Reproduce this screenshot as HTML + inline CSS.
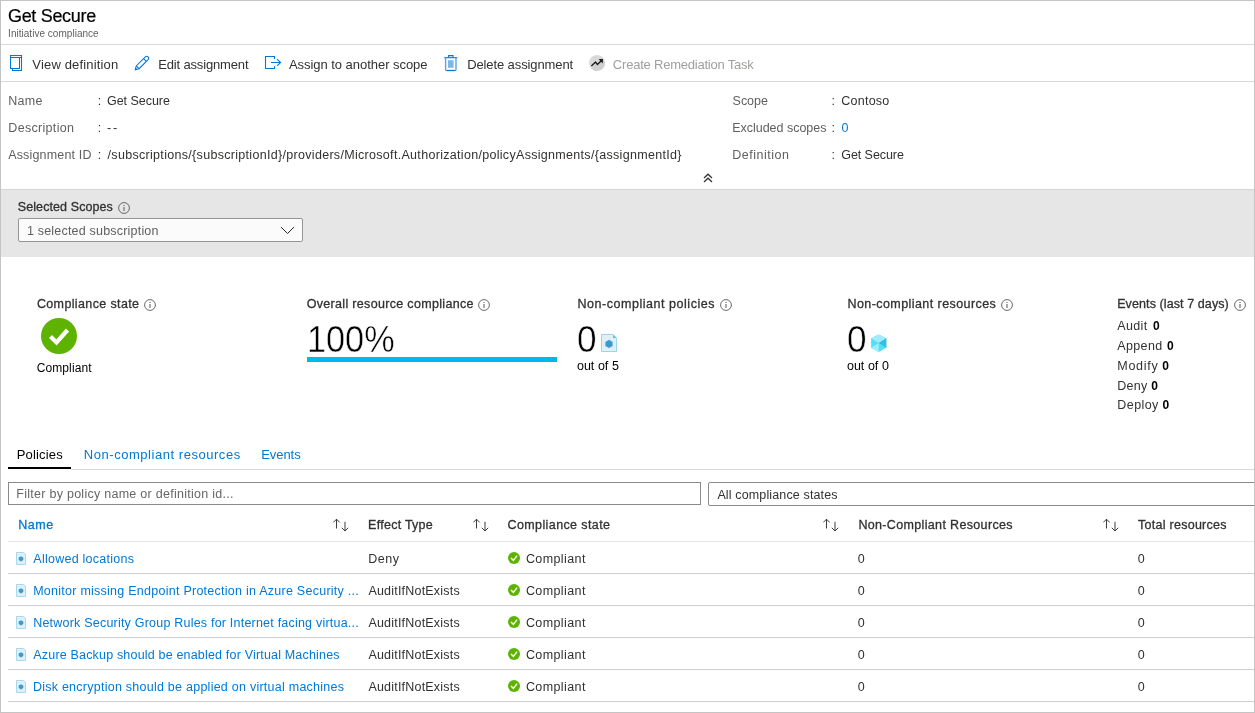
<!DOCTYPE html>
<html><head><meta charset="utf-8"><style>
html,body{margin:0;padding:0;background:#fff}
body{width:1255px;height:713px;position:relative;overflow:hidden;font-family:"Liberation Sans",sans-serif;-webkit-font-smoothing:antialiased}
.wrap{position:absolute;left:0;top:0;width:1255px;height:713px;will-change:transform}
.t{position:absolute;white-space:nowrap}
.frame{position:absolute;left:0;top:0;width:1255px;height:713px;box-sizing:border-box;border:1px solid #c4c4c4;pointer-events:none}
</style></head><body>
<div class="wrap">
<div class="t" style="left:8.00px;top:4.81px;font-size:18px;line-height:22px;color:#000;letter-spacing:-0.320px;-webkit-text-stroke:0.2px #000">Get Secure</div>
<div class="t" style="left:8.10px;top:27.91px;font-size:10px;line-height:12px;color:#5f5f5f;letter-spacing:0.025px;">Initiative compliance</div>
<div style="position:absolute;left:1px;top:44px;width:1253px;height:1px;background:#d9d9d9"></div>
<svg style="position:absolute;left:10px;top:54px" width="13" height="18" viewBox="0 0 13 18"><g fill="none" stroke="#0078d4" stroke-width="1.05"><rect x="0.5" y="1.5" width="11" height="2"/><path d="M0.5 3.5V14.5H9.5V3.5"/><path d="M2.5 14.5V16.5H11.5V3.5"/></g></svg>
<div class="t" style="left:32.37px;top:57.01px;font-size:13px;line-height:16px;color:#323130;letter-spacing:0.161px;">View definition</div>
<svg style="position:absolute;left:134px;top:55px" width="16" height="16" viewBox="0 0 16 16"><g fill="none" stroke="#0078d4" stroke-width="1.05"><path d="M1.2 14.8L2.26 10.92L11.32 1.86A2 2 0 0 1 14.14 4.68L5.08 13.74Z"/><path d="M9.55 3.63L12.37 6.45"/><path d="M2.26 10.92L5.08 13.74"/></g><path d="M0.9 15.1L1.6 12.5L3.5 14.4Z" fill="#0078d4"/></svg>
<div class="t" style="left:158.16px;top:57.01px;font-size:13px;line-height:16px;color:#323130;letter-spacing:-0.149px;">Edit assignment</div>
<svg style="position:absolute;left:264px;top:54px" width="20" height="17" viewBox="0 0 20 17"><g fill="none" stroke="#0078d4" stroke-width="1.05"><path d="M10.5 5V2.5H1.5V14.5H10.5V12.2"/><path d="M7 8.5H16.6"/><path d="M13.1 5.1L16.6 8.5L13.1 11.9"/></g></svg>
<div class="t" style="left:288.90px;top:57.01px;font-size:13px;line-height:16px;color:#323130;letter-spacing:-0.038px;">Assign to another scope</div>
<svg style="position:absolute;left:444px;top:54px" width="14" height="18" viewBox="0 0 14 18"><g fill="none" stroke="#0078d4" stroke-width="1.1"><path d="M4.6 3.3V1.6H9V3.3"/><path d="M0.3 3.7H13.3"/><path d="M1.6 3.7V15.6Q1.6 16.6 2.6 16.6H11Q12 16.6 12 15.6V3.7" stroke-width="1.4" stroke="#5aa6e3"/><path d="M2.6 16.4H11.2"/></g><rect x="4" y="6.2" width="5.6" height="7.6" fill="#7ab8ea"/></svg>
<div class="t" style="left:467.16px;top:57.01px;font-size:13px;line-height:16px;color:#323130;letter-spacing:-0.104px;">Delete assignment</div>
<svg style="position:absolute;left:589px;top:55px" width="16" height="16" viewBox="0 0 16 16"><circle cx="8" cy="8" r="8" fill="#d9d9d9"/><path d="M2.5 13.5L13.5 2.5L16 8 A8 8 0 0 1 2.5 13.5Z" fill="#cfcfcf"/><path d="M2.4 11L6.5 7L8.4 9.5L12.6 5.4" fill="none" stroke="#1b1b1b" stroke-width="1.4"/><path d="M9.6 4.1H13.9V8.4Z" fill="#1b1b1b"/></svg>
<div class="t" style="left:612.85px;top:57.01px;font-size:13px;line-height:16px;color:#a19f9d;letter-spacing:-0.217px;">Create Remediation Task</div>
<div style="position:absolute;left:1px;top:81px;width:1253px;height:1px;background:#d9d9d9"></div>
<div class="t" style="left:8.30px;top:93.01px;font-size:12.5px;line-height:16px;color:#5f5f5f;letter-spacing:0.283px;">Name</div>
<div class="t" style="left:97.67px;top:93.01px;font-size:12.5px;line-height:16px;color:#323130;">:</div>
<div class="t" style="left:106.97px;top:93.01px;font-size:12.5px;line-height:16px;color:#323130;letter-spacing:-0.033px;">Get Secure</div>
<div class="t" style="left:8.30px;top:120.01px;font-size:12.5px;line-height:16px;color:#5f5f5f;letter-spacing:0.315px;">Description</div>
<div class="t" style="left:97.67px;top:120.01px;font-size:12.5px;line-height:16px;color:#323130;">:</div>
<div class="t" style="left:107.10px;top:120.01px;font-size:12.5px;line-height:16px;color:#323130;letter-spacing:1.850px;">--</div>
<div class="t" style="left:8.20px;top:147.01px;font-size:12.5px;line-height:16px;color:#5f5f5f;letter-spacing:0.171px;">Assignment ID</div>
<div class="t" style="left:97.67px;top:147.01px;font-size:12.5px;line-height:16px;color:#323130;">:</div>
<div class="t" style="left:107.60px;top:147.01px;font-size:12.5px;line-height:16px;color:#323130;letter-spacing:0.307px;">/subscriptions/{subscriptionId}/providers/Microsoft.Authorization/policyAssignments/{assignmentId}</div>
<div class="t" style="left:732.58px;top:93.01px;font-size:12.5px;line-height:16px;color:#5f5f5f;letter-spacing:-0.037px;">Scope</div>
<div class="t" style="left:831.48px;top:93.01px;font-size:12.5px;line-height:16px;color:#323130;">:</div>
<div class="t" style="left:841.27px;top:93.01px;font-size:12.5px;line-height:16px;color:#323130;letter-spacing:0.250px;">Contoso</div>
<div class="t" style="left:732.20px;top:120.01px;font-size:12.5px;line-height:16px;color:#5f5f5f;letter-spacing:-0.014px;">Excluded scopes</div>
<div class="t" style="left:831.48px;top:120.01px;font-size:12.5px;line-height:16px;color:#323130;">:</div>
<div class="t" style="left:841.40px;top:120.01px;font-size:12.5px;line-height:16px;color:#0078d4;">0</div>
<div class="t" style="left:732.20px;top:147.01px;font-size:12.5px;line-height:16px;color:#5f5f5f;letter-spacing:0.528px;">Definition</div>
<div class="t" style="left:831.48px;top:147.01px;font-size:12.5px;line-height:16px;color:#323130;">:</div>
<div class="t" style="left:841.27px;top:147.01px;font-size:12.5px;line-height:16px;color:#323130;letter-spacing:-0.067px;">Get Secure</div>
<svg style="position:absolute;left:703px;top:173px" width="10" height="10" viewBox="0 0 10 10"><g fill="none" stroke="#323130" stroke-width="1.2"><path d="M1 5L5 1.2L9 5"/><path d="M1 9L5 5.2L9 9"/></g></svg>
<div style="position:absolute;left:1px;top:189px;width:1253px;height:68px;background:#e6e6e6;border-top:1px solid #d5d5d5;box-sizing:border-box"></div>
<div class="t" style="left:17.77px;top:199.01px;font-size:12.5px;line-height:16px;color:#323130;letter-spacing:0.091px;-webkit-text-stroke:0.3px #323130">Selected Scopes</div>
<svg style="position:absolute;left:118px;top:202px" width="12" height="12" viewBox="0 0 12 12"><circle cx="6" cy="6" r="5.4" fill="none" stroke="#595959" stroke-width="0.9"/><rect x="5.5" y="5" width="1" height="4" fill="#595959"/><rect x="5.5" y="3" width="1" height="1" fill="#595959"/></svg>
<div style="position:absolute;left:18px;top:218px;width:285px;height:24px;background:#fbfbfb;border:1px solid #959595;box-sizing:border-box;border-radius:2px"></div>
<div class="t" style="left:26.90px;top:222.71px;font-size:12.5px;line-height:16px;color:#5f5f5f;letter-spacing:0.201px;">1 selected subscription</div>
<svg style="position:absolute;left:280px;top:225px" width="15" height="10" viewBox="0 0 15 10"><path d="M1.1 2.2L7.5 8.5L13.9 2.2" fill="none" stroke="#252525" stroke-width="1"/></svg>
<div class="t" style="left:36.88px;top:295.71px;font-size:12.5px;line-height:16px;color:#323130;letter-spacing:0.375px;-webkit-text-stroke:0.3px #323130">Compliance state</div>
<svg style="position:absolute;left:144px;top:299.2px" width="12" height="12" viewBox="0 0 12 12"><circle cx="6" cy="6" r="5.4" fill="none" stroke="#595959" stroke-width="0.9"/><rect x="5.5" y="5" width="1" height="4" fill="#595959"/><rect x="5.5" y="3" width="1" height="1" fill="#595959"/></svg>
<svg style="position:absolute;left:41px;top:318px" width="36" height="36" viewBox="0 0 36 36"><circle cx="18" cy="18" r="18" fill="#5db300"/><path d="M9.5 18.5L15.5 24.5L26.5 12" fill="none" stroke="#fff" stroke-width="4.2"/></svg>
<div class="t" style="left:36.70px;top:360.51px;font-size:12px;line-height:15px;color:#000;letter-spacing:0.103px;">Compliant</div>
<div class="t" style="left:306.68px;top:296.01px;font-size:12.5px;line-height:16px;color:#323130;letter-spacing:0.325px;-webkit-text-stroke:0.3px #323130">Overall resource compliance</div>
<svg style="position:absolute;left:478px;top:299.2px" width="12" height="12" viewBox="0 0 12 12"><circle cx="6" cy="6" r="5.4" fill="none" stroke="#595959" stroke-width="0.9"/><rect x="5.5" y="5" width="1" height="4" fill="#595959"/><rect x="5.5" y="3" width="1" height="1" fill="#595959"/></svg>
<div class="t" style="left:307.26px;top:317.02px;font-size:37px;line-height:46px;color:#000;transform:scaleX(0.9260);transform-origin:0 0;-webkit-text-stroke:0.5px #fff">100%</div>
<div style="position:absolute;left:307px;top:357px;width:250px;height:5px;background:#00b7f0"></div>
<div class="t" style="left:577.50px;top:296.01px;font-size:12.5px;line-height:16px;color:#323130;letter-spacing:0.536px;-webkit-text-stroke:0.3px #323130">Non-compliant policies</div>
<svg style="position:absolute;left:720px;top:299.2px" width="12" height="12" viewBox="0 0 12 12"><circle cx="6" cy="6" r="5.4" fill="none" stroke="#595959" stroke-width="0.9"/><rect x="5.5" y="5" width="1" height="4" fill="#595959"/><rect x="5.5" y="3" width="1" height="1" fill="#595959"/></svg>
<div class="t" style="left:576.99px;top:317.02px;font-size:37px;line-height:46px;color:#000;transform:scaleX(0.9516);transform-origin:0 0;-webkit-text-stroke:0.5px #fff">0</div>
<svg style="position:absolute;left:601px;top:334px" width="16" height="18" viewBox="0 0 16 18"><path d="M0.5 0.5H12L15.5 4V17.5H0.5Z" fill="#dff0f8" stroke="#9dd3ec" stroke-width="1"/><path d="M12 0.5V4H15.5Z" fill="#6cbde4"/><path d="M8 5.8L11.6 7.9V11.9L8 14L4.4 11.9V7.9Z" fill="#3a9bd2"/></svg>
<div class="t" style="left:576.90px;top:357.71px;font-size:12.5px;line-height:16px;color:#000;letter-spacing:0.036px;">out of 5</div>
<div class="t" style="left:847.50px;top:296.01px;font-size:12.5px;line-height:16px;color:#323130;letter-spacing:0.427px;-webkit-text-stroke:0.3px #323130">Non-compliant resources</div>
<svg style="position:absolute;left:1001px;top:299.2px" width="12" height="12" viewBox="0 0 12 12"><circle cx="6" cy="6" r="5.4" fill="none" stroke="#595959" stroke-width="0.9"/><rect x="5.5" y="5" width="1" height="4" fill="#595959"/><rect x="5.5" y="3" width="1" height="1" fill="#595959"/></svg>
<div class="t" style="left:846.99px;top:317.02px;font-size:37px;line-height:46px;color:#000;transform:scaleX(0.9516);transform-origin:0 0;-webkit-text-stroke:0.5px #fff">0</div>
<svg style="position:absolute;left:871px;top:334px" width="16" height="18" viewBox="0 0 16 18"><path d="M7.7 0.5L15.3 4.2V13.7L7.7 17.9L0.1 13.7V4.2Z" fill="#50e0f8"/><path d="M7.7 0.5L15.3 4.2L7.7 9.1L0.1 4.2Z" fill="#a0ebfc"/><path d="M15.3 4.2V13.7L7.7 9.1Z" fill="#32bfe0"/><path d="M0.1 13.7L7.7 17.9V9.1Z" fill="#9fecfd"/></svg>
<div class="t" style="left:846.90px;top:357.71px;font-size:12.5px;line-height:16px;color:#000;letter-spacing:0.036px;">out of 0</div>
<div class="t" style="left:1117.20px;top:296.01px;font-size:12.5px;line-height:16px;color:#323130;letter-spacing:0.095px;-webkit-text-stroke:0.3px #323130">Events (last 7 days)</div>
<svg style="position:absolute;left:1234px;top:299.2px" width="12" height="12" viewBox="0 0 12 12"><circle cx="6" cy="6" r="5.4" fill="none" stroke="#595959" stroke-width="0.9"/><rect x="5.5" y="5" width="1" height="4" fill="#595959"/><rect x="5.5" y="3" width="1" height="1" fill="#595959"/></svg>
<div class="t" style="left:1117.20px;top:317.51px;font-size:12.5px;line-height:16px;color:#323130;letter-spacing:0.356px;">Audit</div>
<div class="t" style="left:1153.02px;top:318.51px;font-size:12px;line-height:15px;color:#000;font-weight:700;">0</div>
<div class="t" style="left:1117.20px;top:337.60px;font-size:12.5px;line-height:16px;color:#323130;letter-spacing:0.390px;">Append</div>
<div class="t" style="left:1167.02px;top:338.60px;font-size:12px;line-height:15px;color:#000;font-weight:700;">0</div>
<div class="t" style="left:1117.30px;top:357.80px;font-size:12.5px;line-height:16px;color:#323130;letter-spacing:0.725px;">Modify</div>
<div class="t" style="left:1162.32px;top:358.81px;font-size:12px;line-height:15px;color:#000;font-weight:700;">0</div>
<div class="t" style="left:1117.30px;top:377.60px;font-size:12.5px;line-height:16px;color:#323130;letter-spacing:0.292px;">Deny</div>
<div class="t" style="left:1151.22px;top:378.60px;font-size:12px;line-height:15px;color:#000;font-weight:700;">0</div>
<div class="t" style="left:1117.30px;top:397.21px;font-size:12.5px;line-height:16px;color:#323130;letter-spacing:0.425px;">Deploy</div>
<div class="t" style="left:1162.52px;top:398.21px;font-size:12px;line-height:15px;color:#000;font-weight:700;">0</div>
<div class="t" style="left:16.76px;top:447.31px;font-size:13px;line-height:16px;color:#000;letter-spacing:0.173px;">Policies</div>
<div style="position:absolute;left:8px;top:467px;width:63px;height:2px;background:#000"></div>
<div class="t" style="left:83.86px;top:447.31px;font-size:13px;line-height:16px;color:#0078d4;letter-spacing:0.536px;">Non-compliant resources</div>
<div class="t" style="left:261.16px;top:447.31px;font-size:13px;line-height:16px;color:#0078d4;letter-spacing:-0.044px;">Events</div>
<div style="position:absolute;left:71px;top:469px;width:1183px;height:1px;background:#d9d9d9"></div>
<div style="position:absolute;left:8px;top:482px;width:693px;height:23px;background:#fff;border:1px solid #8a8a8a;box-sizing:border-box"></div>
<div class="t" style="left:16.30px;top:486.40px;font-size:12.5px;line-height:16px;color:#666;letter-spacing:0.269px;">Filter by policy name or definition id...</div>
<div style="position:absolute;left:708px;top:482px;width:560px;height:24px;background:#fff;border:1px solid #8a8a8a;box-sizing:border-box;border-radius:2px"></div>
<div class="t" style="left:717.40px;top:487.01px;font-size:12.5px;line-height:16px;color:#323130;letter-spacing:0.136px;">All compliance states</div>
<div class="t" style="left:18.20px;top:517.01px;font-size:12.5px;line-height:16px;color:#0078d4;letter-spacing:0.550px;-webkit-text-stroke:0.3px #0078d4">Name</div>
<svg style="position:absolute;left:333px;top:517px" width="16" height="16" viewBox="0 0 16 16"><g fill="none" stroke="#323130" stroke-width="0.95"><path d="M3.5 11.5V2.2M0.3 5.4L3.5 2.2L6.7 5.4"/><path d="M12 4.8V14M8.8 10.8L12 14L15.2 10.8"/></g></svg>
<div class="t" style="left:368.10px;top:517.01px;font-size:12.5px;line-height:16px;color:#323130;letter-spacing:0.260px;-webkit-text-stroke:0.3px #323130">Effect Type</div>
<svg style="position:absolute;left:473px;top:517px" width="16" height="16" viewBox="0 0 16 16"><g fill="none" stroke="#323130" stroke-width="0.95"><path d="M3.5 11.5V2.2M0.3 5.4L3.5 2.2L6.7 5.4"/><path d="M12 4.8V14M8.8 10.8L12 14L15.2 10.8"/></g></svg>
<div class="t" style="left:507.57px;top:517.01px;font-size:12.5px;line-height:16px;color:#323130;letter-spacing:0.388px;-webkit-text-stroke:0.3px #323130">Compliance state</div>
<svg style="position:absolute;left:823px;top:517px" width="16" height="16" viewBox="0 0 16 16"><g fill="none" stroke="#323130" stroke-width="0.95"><path d="M3.5 11.5V2.2M0.3 5.4L3.5 2.2L6.7 5.4"/><path d="M12 4.8V14M8.8 10.8L12 14L15.2 10.8"/></g></svg>
<div class="t" style="left:858.40px;top:517.01px;font-size:12.5px;line-height:16px;color:#323130;letter-spacing:0.344px;-webkit-text-stroke:0.3px #323130">Non-Compliant Resources</div>
<svg style="position:absolute;left:1103px;top:517px" width="16" height="16" viewBox="0 0 16 16"><g fill="none" stroke="#323130" stroke-width="0.95"><path d="M3.5 11.5V2.2M0.3 5.4L3.5 2.2L6.7 5.4"/><path d="M12 4.8V14M8.8 10.8L12 14L15.2 10.8"/></g></svg>
<div class="t" style="left:1138.05px;top:517.01px;font-size:12.5px;line-height:16px;color:#323130;letter-spacing:0.264px;-webkit-text-stroke:0.3px #323130">Total resources</div>
<div style="position:absolute;left:8px;top:541px;width:1246px;height:1px;background:#e9e7e5"></div>
<svg style="position:absolute;left:16px;top:552px" width="10" height="13" viewBox="0 0 10 13"><path d="M0.5 0.5H7.5L9.5 2.5V12.5H0.5Z" fill="#dff0f8" stroke="#a8d8ee" stroke-width="1"/><path d="M5 4.2L7.3 5.5V8.1L5 9.4L2.7 8.1V5.5Z" fill="#3a9bd2"/></svg>
<div class="t" style="left:33.30px;top:551.01px;font-size:12.5px;line-height:16px;color:#0078d4;letter-spacing:0.255px;">Allowed locations</div>
<div class="t" style="left:368.20px;top:551.01px;font-size:12.5px;line-height:16px;color:#323130;letter-spacing:0.558px;">Deny</div>
<svg style="position:absolute;left:508px;top:552px" width="13" height="13" viewBox="0 0 13 13"><circle cx="6" cy="6" r="6" fill="#5db300"/><path d="M3 5.9L5.4 8.4L9.1 3.6" fill="none" stroke="#fff" stroke-width="1.4"/></svg>
<div class="t" style="left:525.88px;top:551.01px;font-size:12.5px;line-height:16px;color:#323130;letter-spacing:0.412px;">Compliant</div>
<div class="t" style="left:857.70px;top:551.01px;font-size:12.5px;line-height:16px;color:#323130;">0</div>
<div class="t" style="left:1137.70px;top:551.01px;font-size:12.5px;line-height:16px;color:#323130;">0</div>
<div style="position:absolute;left:8px;top:573px;width:1246px;height:1px;background:#cfcfcf"></div>
<svg style="position:absolute;left:16px;top:584px" width="10" height="13" viewBox="0 0 10 13"><path d="M0.5 0.5H7.5L9.5 2.5V12.5H0.5Z" fill="#dff0f8" stroke="#a8d8ee" stroke-width="1"/><path d="M5 4.2L7.3 5.5V8.1L5 9.4L2.7 8.1V5.5Z" fill="#3a9bd2"/></svg>
<div class="t" style="left:33.20px;top:583.01px;font-size:12.5px;line-height:16px;color:#0078d4;letter-spacing:0.255px;">Monitor missing Endpoint Protection in Azure Security ...</div>
<div class="t" style="left:368.40px;top:583.01px;font-size:12.5px;line-height:16px;color:#323130;letter-spacing:0.203px;">AuditIfNotExists</div>
<svg style="position:absolute;left:508px;top:584px" width="13" height="13" viewBox="0 0 13 13"><circle cx="6" cy="6" r="6" fill="#5db300"/><path d="M3 5.9L5.4 8.4L9.1 3.6" fill="none" stroke="#fff" stroke-width="1.4"/></svg>
<div class="t" style="left:525.88px;top:583.01px;font-size:12.5px;line-height:16px;color:#323130;letter-spacing:0.412px;">Compliant</div>
<div class="t" style="left:857.70px;top:583.01px;font-size:12.5px;line-height:16px;color:#323130;">0</div>
<div class="t" style="left:1137.70px;top:583.01px;font-size:12.5px;line-height:16px;color:#323130;">0</div>
<div style="position:absolute;left:8px;top:605px;width:1246px;height:1px;background:#cfcfcf"></div>
<svg style="position:absolute;left:16px;top:616px" width="10" height="13" viewBox="0 0 10 13"><path d="M0.5 0.5H7.5L9.5 2.5V12.5H0.5Z" fill="#dff0f8" stroke="#a8d8ee" stroke-width="1"/><path d="M5 4.2L7.3 5.5V8.1L5 9.4L2.7 8.1V5.5Z" fill="#3a9bd2"/></svg>
<div class="t" style="left:33.20px;top:615.01px;font-size:12.5px;line-height:16px;color:#0078d4;letter-spacing:0.213px;">Network Security Group Rules for Internet facing virtua...</div>
<div class="t" style="left:368.40px;top:615.01px;font-size:12.5px;line-height:16px;color:#323130;letter-spacing:0.203px;">AuditIfNotExists</div>
<svg style="position:absolute;left:508px;top:616px" width="13" height="13" viewBox="0 0 13 13"><circle cx="6" cy="6" r="6" fill="#5db300"/><path d="M3 5.9L5.4 8.4L9.1 3.6" fill="none" stroke="#fff" stroke-width="1.4"/></svg>
<div class="t" style="left:525.88px;top:615.01px;font-size:12.5px;line-height:16px;color:#323130;letter-spacing:0.412px;">Compliant</div>
<div class="t" style="left:857.70px;top:615.01px;font-size:12.5px;line-height:16px;color:#323130;">0</div>
<div class="t" style="left:1137.70px;top:615.01px;font-size:12.5px;line-height:16px;color:#323130;">0</div>
<div style="position:absolute;left:8px;top:637px;width:1246px;height:1px;background:#cfcfcf"></div>
<svg style="position:absolute;left:16px;top:648px" width="10" height="13" viewBox="0 0 10 13"><path d="M0.5 0.5H7.5L9.5 2.5V12.5H0.5Z" fill="#dff0f8" stroke="#a8d8ee" stroke-width="1"/><path d="M5 4.2L7.3 5.5V8.1L5 9.4L2.7 8.1V5.5Z" fill="#3a9bd2"/></svg>
<div class="t" style="left:33.30px;top:647.01px;font-size:12.5px;line-height:16px;color:#0078d4;letter-spacing:0.181px;">Azure Backup should be enabled for Virtual Machines</div>
<div class="t" style="left:368.40px;top:647.01px;font-size:12.5px;line-height:16px;color:#323130;letter-spacing:0.203px;">AuditIfNotExists</div>
<svg style="position:absolute;left:508px;top:648px" width="13" height="13" viewBox="0 0 13 13"><circle cx="6" cy="6" r="6" fill="#5db300"/><path d="M3 5.9L5.4 8.4L9.1 3.6" fill="none" stroke="#fff" stroke-width="1.4"/></svg>
<div class="t" style="left:525.88px;top:647.01px;font-size:12.5px;line-height:16px;color:#323130;letter-spacing:0.412px;">Compliant</div>
<div class="t" style="left:857.70px;top:647.01px;font-size:12.5px;line-height:16px;color:#323130;">0</div>
<div class="t" style="left:1137.70px;top:647.01px;font-size:12.5px;line-height:16px;color:#323130;">0</div>
<div style="position:absolute;left:8px;top:669px;width:1246px;height:1px;background:#cfcfcf"></div>
<svg style="position:absolute;left:16px;top:680px" width="10" height="13" viewBox="0 0 10 13"><path d="M0.5 0.5H7.5L9.5 2.5V12.5H0.5Z" fill="#dff0f8" stroke="#a8d8ee" stroke-width="1"/><path d="M5 4.2L7.3 5.5V8.1L5 9.4L2.7 8.1V5.5Z" fill="#3a9bd2"/></svg>
<div class="t" style="left:32.90px;top:679.01px;font-size:12.5px;line-height:16px;color:#0078d4;letter-spacing:0.250px;">Disk encryption should be applied on virtual machines</div>
<div class="t" style="left:368.40px;top:679.01px;font-size:12.5px;line-height:16px;color:#323130;letter-spacing:0.203px;">AuditIfNotExists</div>
<svg style="position:absolute;left:508px;top:680px" width="13" height="13" viewBox="0 0 13 13"><circle cx="6" cy="6" r="6" fill="#5db300"/><path d="M3 5.9L5.4 8.4L9.1 3.6" fill="none" stroke="#fff" stroke-width="1.4"/></svg>
<div class="t" style="left:525.88px;top:679.01px;font-size:12.5px;line-height:16px;color:#323130;letter-spacing:0.412px;">Compliant</div>
<div class="t" style="left:857.70px;top:679.01px;font-size:12.5px;line-height:16px;color:#323130;">0</div>
<div class="t" style="left:1137.70px;top:679.01px;font-size:12.5px;line-height:16px;color:#323130;">0</div>
<div style="position:absolute;left:8px;top:701px;width:1246px;height:1px;background:#cfcfcf"></div>
</div>
<div class="frame"></div>
</body></html>
